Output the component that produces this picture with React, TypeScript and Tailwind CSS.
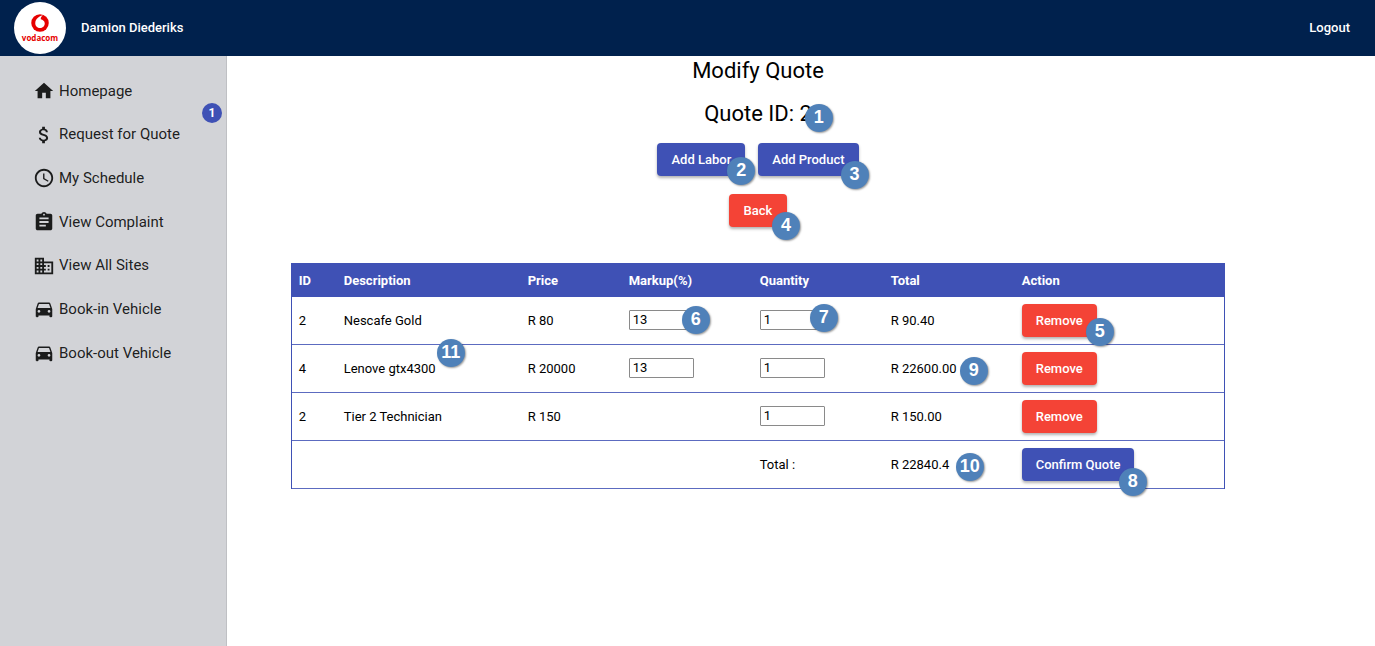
import type { ReactNode } from "react";
import {
  MdAssignment,
  MdAttachMoney,
  MdBusiness,
  MdDirectionsCar,
  MdHome,
  MdSchedule,
} from "react-icons/md";

const navItems = [
  { label: "Homepage", Icon: MdHome },
  { label: "Request for Quote", Icon: MdAttachMoney, count: 1 },
  { label: "My Schedule", Icon: MdSchedule },
  { label: "View Complaint", Icon: MdAssignment },
  { label: "View All Sites", Icon: MdBusiness },
  { label: "Book-in Vehicle", Icon: MdDirectionsCar },
  { label: "Book-out Vehicle", Icon: MdDirectionsCar },
];

const columns = [
  { title: "ID", width: "w-[45px]" },
  { title: "Description", width: "w-[184px]" },
  { title: "Price", width: "w-[101px]" },
  { title: "Markup(%)", width: "w-[131px]" },
  { title: "Quantity", width: "w-[131px]" },
  { title: "Total", width: "w-[131px]" },
  { title: "Action", width: "" },
];

type Row = {
  id: number;
  description: string;
  price: string;
  markup?: number;
  quantity: number;
  total: string;
  marks?: Partial<Record<"description" | "markup" | "quantity" | "total" | "action", ReactNode>>;
};

function Marker({ n, at }: { n: number; at: string }) {
  return (
    <span
      className={`absolute z-10 flex size-7 items-center justify-center rounded-full bg-[#4f81b9] pb-0.5 font-['Liberation_Sans',sans-serif] text-lg leading-none font-bold text-white shadow-[1px_1px_2px_rgba(0,0,0,0.4)] ${at}`}
    >
      {n}
    </span>
  );
}

const rows: Row[] = [
  {
    id: 2,
    description: "Nescafe Gold",
    price: "R 80",
    markup: 13,
    quantity: 1,
    total: "R 90.40",
    marks: {
      markup: <Marker n={6} at="-top-1 left-[53px]" />,
      quantity: <Marker n={7} at="-top-1.5 left-[50px]" />,
      action: <Marker n={5} at="top-3.5 left-16" />,
    },
  },
  {
    id: 4,
    description: "Lenove gtx4300",
    price: "R 20000",
    markup: 13,
    quantity: 1,
    total: "R 22600.00",
    marks: {
      description: <Marker n={11} at="-top-5 left-[93px]" />,
      total: <Marker n={9} at="-top-0.5 left-[69px]" />,
    },
  },
  { id: 2, description: "Tier 2 Technician", price: "R 150", quantity: 1, total: "R 150.00" },
];

function Button({ children, danger = false }: { children: ReactNode; danger?: boolean }) {
  return (
    <button
      type="button"
      className={`h-[33px] min-w-[58px] cursor-pointer rounded-[4px] px-3.5 text-[13px] font-medium whitespace-nowrap text-white shadow-[0_2px_3px_rgba(0,0,0,0.3)] ${
        danger ? "bg-[#f44336]" : "bg-[#3f51b5]"
      }`}
    >
      {children}
    </button>
  );
}

function NumberField({ label, value }: { label: string; value: number }) {
  return (
    <div className="pb-px">
      <input
        aria-label={label}
        defaultValue={value}
        inputMode="numeric"
        className="block h-5 w-[65px] rounded-[1px] border border-[#8a8a8a] bg-white px-[3px] pb-px text-[13px] leading-4 text-black"
      />
    </div>
  );
}

function Logo() {
  return (
    <div className="flex size-[52px] shrink-0 flex-col items-center rounded-full bg-white pt-3">
      <svg viewBox="0 0 36 36" className="size-[18px]" aria-hidden="true">
        <circle cx="18" cy="18" r="17.5" fill="#e60000" />
        <path
          d="M24 2.5C18 3.5 8.5 9 8.5 18.500c0 6 4.500 9.500 9.500 9.500s9.500-3.500 9.500-9c0-5-4-7.500-8-8.500-.2-3 1.500-6.500 4.500-8z"
          fill="#fff"
        />
      </svg>
      <span className="mt-px font-['Open_Sans',sans-serif] text-[8px] leading-[10px] font-bold text-[#e60000]">
        vodacom
      </span>
    </div>
  );
}

export default function App() {
  return (
    <div className="flex min-h-screen flex-col bg-white font-[Roboto,sans-serif] text-[13px] text-black">
      <header className="flex h-14 items-center justify-between bg-[#00214d] pr-[25px] pb-px pl-3.5 font-medium text-white">
        <div className="flex items-center gap-[15px]">
          <Logo />
          <span>Damion Diederiks</span>
        </div>
        <a href="#logout">Logout</a>
      </header>

      <div className="flex flex-1">
        <nav className="w-[227px] shrink-0 border-r border-[#bfc0c4] bg-[#d2d3d7] pt-[13px]">
          <ul className="grid h-[306px] auto-rows-fr">
            {navItems.map(({ label, Icon, count }) => (
              <li key={label} className="relative">
                <a
                  href="#nav"
                  className="flex h-full items-center gap-1 pl-[33px] text-[15px] text-black/87"
                >
                  <Icon className="size-[22px]" />
                  {label}
                </a>
                {count && (
                  <span className="absolute -top-2.5 right-1 flex size-5 items-center justify-center rounded-full bg-[#3f51b5] text-xs font-bold text-white">
                    {count}
                  </span>
                )}
              </li>
            ))}
          </ul>
        </nav>

        <main className="flex flex-1 flex-col items-center pr-[86px]">
          <h1 className="text-[22px] leading-[29px]">Modify Quote</h1>
          <h2 className="relative mt-3.5 text-[22px] leading-[29px]">
            Quote ID: 2
            <Marker n={1} at="top-[5px] -right-[21px]" />
          </h2>

          <div className="mt-[15px] flex gap-[13px]">
            <div className="relative">
              <Button>Add Labor</Button>
              <Marker n={2} at="top-3.5 -right-2.5" />
            </div>
            <div className="relative">
              <Button>Add Product</Button>
              <Marker n={3} at="top-[18px] -right-2.5" />
            </div>
          </div>
          <div className="relative mt-[18px]">
            <Button danger>Back</Button>
            <Marker n={4} at="top-[18px] -right-[13px]" />
          </div>

          <table className="mt-9 w-[88%] table-fixed border-separate border-spacing-0 border-x border-[#3f51b5] text-left">
            <thead>
              <tr className="h-[34px] bg-[#3f51b5] text-white">
                {columns.map(({ title, width }) => (
                  <th key={title} className={`px-[7px] pt-px font-bold ${width}`}>
                    {title}
                  </th>
                ))}
              </tr>
            </thead>
            <tbody className="[&_td]:h-12 [&_td]:border-b [&_td]:border-[#5c6bc0] [&_td]:px-[7px]">
              {rows.map((row) => (
                <tr key={row.description}>
                  <td>{row.id}</td>
                  <td>
                    <div className="relative">
                      {row.description}
                      {row.marks?.description}
                    </div>
                  </td>
                  <td>{row.price}</td>
                  <td>
                    {row.markup !== undefined && (
                      <div className="relative">
                        <NumberField label={`Markup for ${row.description}`} value={row.markup} />
                        {row.marks?.markup}
                      </div>
                    )}
                  </td>
                  <td>
                    <div className="relative">
                      <NumberField label={`Quantity of ${row.description}`} value={row.quantity} />
                      {row.marks?.quantity}
                    </div>
                  </td>
                  <td>
                    <div className="relative">
                      {row.total}
                      {row.marks?.total}
                    </div>
                  </td>
                  <td>
                    <div className="relative">
                      <Button danger>Remove</Button>
                      {row.marks?.action}
                    </div>
                  </td>
                </tr>
              ))}
              <tr>
                <td colSpan={4} />
                <td>Total :</td>
                <td>
                  <div className="relative">
                    R 22840.4
                    <Marker n={10} at="-top-0.5 left-[65px]" />
                  </div>
                </td>
                <td>
                  <div className="relative">
                    <Button>Confirm Quote</Button>
                    <Marker n={8} at="top-5 left-[97px]" />
                  </div>
                </td>
              </tr>
            </tbody>
          </table>
        </main>
      </div>
    </div>
  );
}
